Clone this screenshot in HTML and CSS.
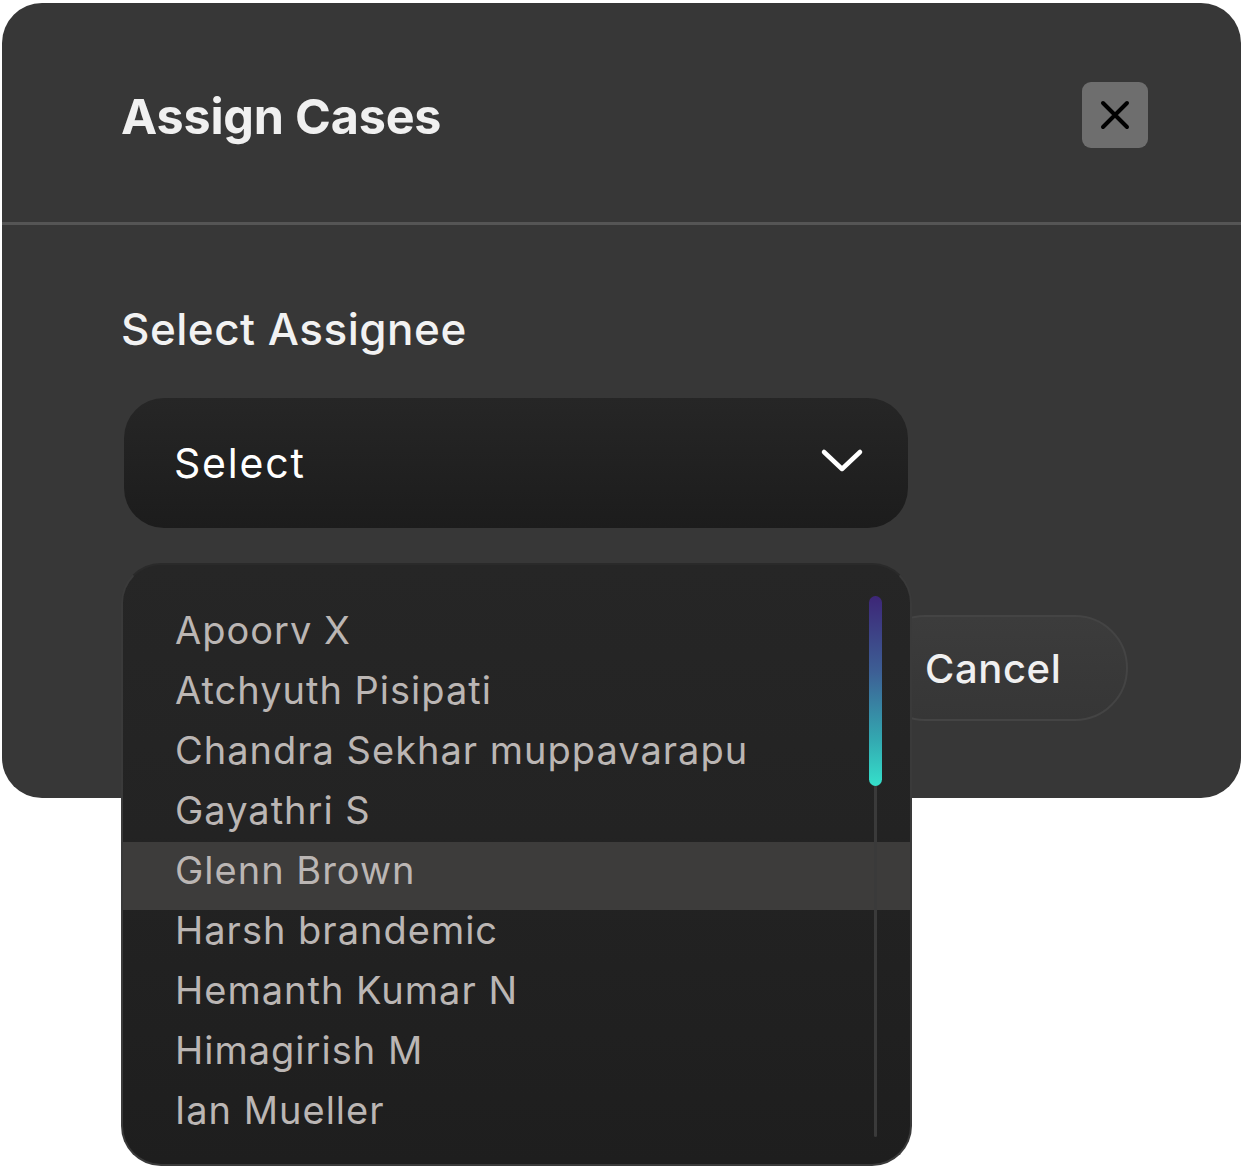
FILE: index.html
```html
<!DOCTYPE html>
<html lang="en">
<head>
<meta charset="utf-8">
<title>Assign Cases</title>
<link rel="stylesheet" href="styles.css">
</head>
<body>
<div class="modal">
  <div class="modal-header">
    <h1 class="modal-title">Assign Cases</h1>
    <button class="close-btn" aria-label="Close">
      <svg width="34" height="34" viewBox="0 0 34 34"><path d="M5 5 L29 29 M29 5 L5 29" stroke="#000" stroke-width="4" stroke-linecap="round" fill="none"/></svg>
    </button>
  </div>
  <div class="modal-body">
    <div class="field-label">Select Assignee</div>
    <div class="select-box">
      <span class="select-text">Select</span>
      <svg class="chevron" width="44" height="28" viewBox="0 0 44 28"><path d="M4 5 L22 22 L40 5" stroke="#fff" stroke-width="4.5" stroke-linecap="round" stroke-linejoin="round" fill="none"/></svg>
    </div>
    <div class="footer">
      <button class="cancel-btn">Cancel</button>
    </div>
  </div>
</div>
<div class="dropdown">
  <ul class="options">
    <li class="option">Apoorv X</li>
    <li class="option">Atchyuth Pisipati</li>
    <li class="option">Chandra Sekhar muppavarapu</li>
    <li class="option">Gayathri S</li>
    <li class="option active">Glenn Brown</li>
    <li class="option">Harsh brandemic</li>
    <li class="option">Hemanth Kumar N</li>
    <li class="option">Himagirish M</li>
    <li class="option">Ian Mueller</li>
  </ul>
  <div class="scroll-track"><div class="scroll-thumb"></div></div>
</div>
</body>
</html>
```

FILE: styles.css
```css
* { box-sizing: border-box; }
html, body { margin: 0; padding: 0; }
body {
  background: #ffffff;
  width: 1243px;
  height: 1166px;
  overflow: hidden;
  position: relative;
  font-family: Inter, "Liberation Sans", sans-serif;
}
.modal {
  margin: 3px 0 0 2px;
  width: 1239px;
  height: 795px;
  background: #373737;
  border-radius: 40px;
  display: flex;
  flex-direction: column;
}
.modal-header {
  height: 222px;
  padding: 0 93px 0 119px;
  display: flex;
  align-items: center;
  justify-content: space-between;
  border-bottom: 3px solid #555555;
}
.modal-title {
  margin: 0;
  font-size: 48.5px;
  font-weight: 700;
  color: #f0f0f0;
  letter-spacing: -0.2px;
  padding-top: 8px;
}
.close-btn {
  width: 66px;
  height: 66px;
  border: none;
  border-radius: 9px;
  background: #6e6e6e;
  display: flex;
  align-items: center;
  justify-content: center;
  padding: 0;
  margin-top: 4px;
}
.modal-body {
  padding: 78px 0 0 119px;
  display: flex;
  flex-direction: column;
}
.field-label {
  font-size: 44px;
  font-weight: 500;
  color: #f2f2f2;
  line-height: 52px;
  letter-spacing: 0.5px;
}
.select-box {
  margin: 43px 0 0 3px;
  width: 784px;
  height: 130px;
  border-radius: 40px;
  background: linear-gradient(180deg, #262626 0%, #1c1c1c 100%);
  display: flex;
  align-items: center;
  justify-content: space-between;
  padding: 0 44px 0 50px;
}
.select-text {
  font-size: 41px;
  color: #ffffff;
  font-weight: 400;
  letter-spacing: 1.8px;
}
.chevron { margin-top: -4px; }
.footer {
  display: flex;
  justify-content: flex-end;
  padding-right: 113px;
  margin-top: 87px;
}
.cancel-btn {
  width: 256px;
  height: 106px;
  border-radius: 53px;
  border: 2px solid #444444;
  background: linear-gradient(180deg, #3c3c3c 0%, #363636 100%);
  color: #f0f0f0;
  font-family: Inter, "Liberation Sans", sans-serif;
  font-size: 40px;
  font-weight: 500;
  text-align: left;
  padding: 0 0 0 51px;
  letter-spacing: 0.6px;
}
.dropdown {
  position: absolute;
  left: 121px;
  top: 563px;
  width: 791px;
  height: 603px;
  border-radius: 40px;
  background: linear-gradient(180deg, #262626 0%, #232323 45%, #1e1e1e 100%);
  border: 2px solid #3a3a3a;
  border-top-color: #2a2a2a;
  overflow: hidden;
}
.options {
  list-style: none;
  margin: 0;
  padding: 35px 0 0 0;
}
.option {
  height: 60px;
  line-height: 60px;
  padding-left: 52px;
  font-size: 38px;
  color: #bbb6b4;
  letter-spacing: 1px;
  white-space: nowrap;
}
.option.active {
  background: linear-gradient(180deg, transparent 2px, #3d3c3b 2px);
  box-shadow: 0 10px 0 #3d3c3b;
}
.scroll-track {
  position: absolute;
  left: 751px;
  top: 31px;
  width: 3px;
  height: 541px;
  background: #3a3a3a;
  border-radius: 2px;
}
.scroll-thumb {
  position: absolute;
  left: -5px;
  top: 0;
  width: 13px;
  height: 190px;
  border-radius: 7px;
  background: linear-gradient(180deg, #3d2677 0%, #3d5f95 40%, #33a7b0 75%, #35e0cb 100%);
}
```
